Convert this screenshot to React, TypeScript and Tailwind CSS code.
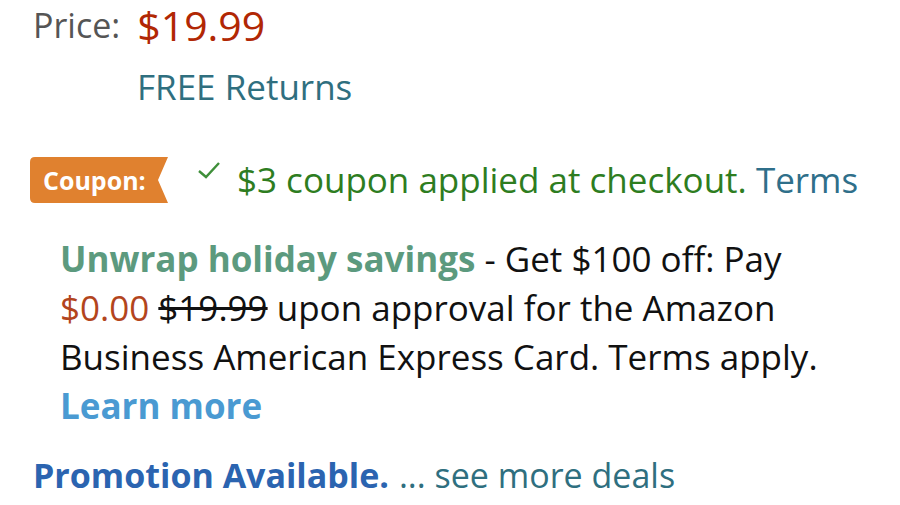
import React from 'react';

const font = { fontFamily: '"Open Sans", "Noto Sans", sans-serif' };

function CouponBadge() {
  return (
    <div className="relative flex h-[46px] w-[138px] shrink-0 items-center">
      <svg className="absolute inset-0" width="138" height="46" viewBox="0 0 138 46">
        <path d="M5 0 H138 L128 23 L138 46 H5 Q0 46 0 41 V5 Q0 0 5 0 Z" fill="#e0812f" />
      </svg>
      <span className="relative pl-[13px] text-[25px] leading-[46px] font-bold text-white">Coupon:</span>
    </div>
  );
}

export default function App() {
  return (
    <div className="h-[505px] w-[900px] overflow-hidden bg-white" style={font}>
      {/* Price */}
      <div className="flex h-[50px] items-center leading-[50px]">
        <span className="ml-[33px] text-[34px] text-[#555]">Price:</span>
        <span className="ml-[17px] text-[41px] text-[#b12704]">$19.99</span>
      </div>
      <div className="mt-[12px] flex h-[50px] items-center pl-[137px] text-[35px] leading-[50px] text-[#2f6f7f]">
        FREE Returns
      </div>

      {/* Coupon */}
      <div className="mt-[45px] flex h-[46px] items-center pl-[30px]">
        <CouponBadge />
        <svg className="ml-[29px] mb-[20px]" width="24" height="20" viewBox="0 0 24 20">
          <polyline points="2,11 9,17 22,3" fill="none" stroke="#3f8f3a" strokeWidth="2.4" />
        </svg>
        <span className="ml-[16px] whitespace-nowrap text-[35px] leading-[46px] text-[#2e7d1f]">
          $3 coupon applied at checkout. <span className="text-[#2f6f8a]">Terms</span>
        </span>
      </div>

      {/* Offer */}
      <div className="mt-[31px] pl-[60px] text-[35px] leading-[49px] text-[#111]">
        <div className="whitespace-nowrap">
          <span className="font-bold text-[#5c9a7e]">Unwrap holiday savings</span> - Get $100 off: Pay
        </div>
        <div className="whitespace-nowrap">
          <span className="text-[#b3451d]">$0.00</span> <span className="line-through">$19.99</span> upon approval for the Amazon
        </div>
        <div className="whitespace-nowrap">Business American Express Card. Terms apply.</div>
        <div className="font-bold text-[#4a9ad2]">Learn more</div>
      </div>

      {/* Promotion */}
      <div className="mt-[21px] flex h-[49px] items-center whitespace-nowrap pl-[33px] text-[34px] leading-[49px]">
        <span className="font-bold text-[#2b64b0]">Promotion Available.</span>
        <span className="ml-[10px] text-[#2f6f7f]">... see more deals</span>
      </div>
    </div>
  );
}
